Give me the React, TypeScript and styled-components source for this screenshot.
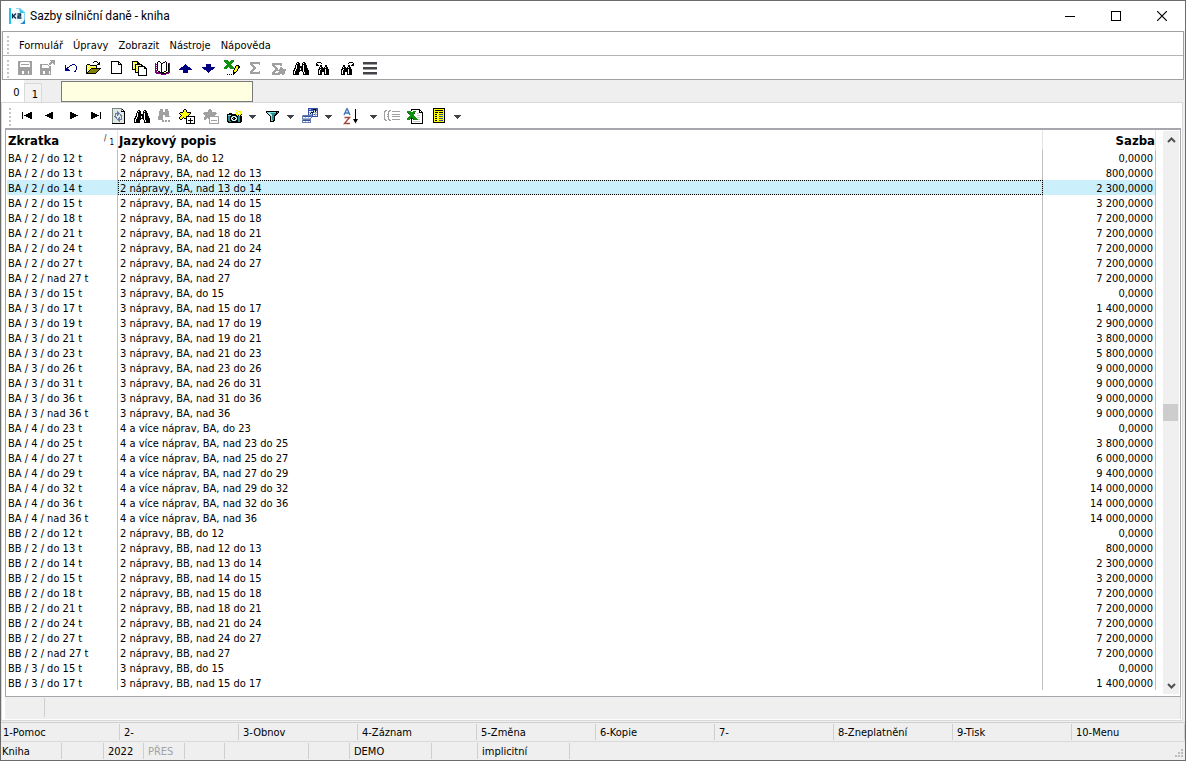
import React from "react";
import styled, { createGlobalStyle, css } from "styled-components";

const GlobalStyle = createGlobalStyle`
  * { box-sizing: border-box; }
  body { margin: 0; background: #efefef; }
  button, input { font: inherit; color: inherit; }
`;

const uiFont = `"DejaVu Sans Condensed", Tahoma, "Noto Sans", sans-serif`;

/* ---------- pixel icons ---------- */

const palette: Record<string, string> = {
  k: "#000000",
  g: "#a0a0a0",
  L: "#c8c8c8",
  n: "#000080",
  b: "#2f52a8",
  s: "#9db4dc",
  y: "#ffffb0",
  Y: "#ffff00",
  o: "#808000",
  G: "#109010",
  D: "#005500",
  p: "#800080",
  w: "#ffffff",
  c: "#7fdcdc",
  t: "#2d8a8a",
  r: "#b04030",
  d: "#404448",
  e: "#dfe8e2",
  q: "#6c7ca8",
  m: "#7c8680",
};

type PixelProps = { rows: string[]; x?: number; y?: number; size?: number };

function Pixels({ rows, x = 0, y = 0, size = 17 }: PixelProps) {
  const cells: React.ReactNode[] = [];
  rows.forEach((row, j) => {
    let i = 0;
    while (i < row.length) {
      const ch = row[i];
      let end = i + 1;
      while (end < row.length && row[end] === ch) end++;
      if (ch !== ".") {
        cells.push(
          <rect key={`${j}-${i}`} x={x + i} y={y + j} width={end - i} height={1} fill={palette[ch]} />
        );
      }
      i = end;
    }
  });
  return (
    <svg width={size} height={17} viewBox={`0 0 ${size} 17`} shapeRendering="crispEdges" aria-hidden="true">
      {cells}
    </svg>
  );
}

const art = {
  save: [
    "gggggggggggggg",
    "ggLwwwwwwwwLgg",
    "ggwwwwwwwwwwgg",
    "ggwggggggggwgg",
    "ggwwwwwwwwwwgg",
    "ggwwwwwwwwwwgg",
    "gggggggggggggg",
    "gggggggggggggg",
    "gggggggggggggg",
    "gggggggggggggg",
    "ggggwwggggwggg",
    "ggggwwggggwggg",
    "ggggwwggggwggg",
    "gggggggggggggg",
  ],
  saveAs: [
    "..........ggggg",
    "...........gggg",
    "..........ggggg",
    ".........ggg.gg",
    "gggggggg.gg...g",
    "ggwwwwwwg......",
    "ggwwwwwwwgg....",
    "ggwwwwwwwgg....",
    "ggggggggggg....",
    "ggggggggggg....",
    "ggggggggggg....",
    "gggwwggggwg....",
    "gggwwggggwg....",
    "gggwwggggwg....",
    "ggggggggggg....",
  ],
  undo: [
    ".......nnn...",
    "n....nn...n..",
    "n...n......n.",
    "n.nn.......n.",
    "nnn........n.",
    "nnnn.......n.",
    "nnnnn.....n..",
    ".........nn..",
  ],
  open: [
    ".........kkk....",
    "........k...k.k.",
    ".............kk.",
    "..kkk.......kkk.",
    ".kyYykkkkkkk....",
    ".kYyYyYyYyYk....",
    ".kyYyYyYyYyk....",
    ".kYyYykkkkkkkkkk",
    ".kyYykooooooook.",
    ".kYykooooooook..",
    ".kykooooooook...",
    ".kkooooooook....",
    ".kkkkkkkkkk.....",
  ],
  page: [
    "kkkkkkkk...",
    "kwwwwwwkk..",
    "kwwwwwwkwk.",
    "kwwwwwwkkkk",
    "kwwwwwwwwwk",
    "kwwwwwwwwwk",
    "kwwwwwwwwwk",
    "kwwwwwwwwwk",
    "kwwwwwwwwwk",
    "kwwwwwwwwwk",
    "kwwwwwwwwwk",
    "kwwwwwwwwwk",
    "kkkkkkkkkkk",
  ],
  pages: [
    "kkkkkk.........",
    "kyYyYkk........",
    "kYyYykkk.......",
    "kyYkkkkkkk.....",
    "kYykyYyYykk....",
    "kyYkYykkkkkkk..",
    "kYykyYkwwwwwkk.",
    "kyYkYykwwwwwkkk",
    "kkkkyYkwwwwwwwk",
    "...kYykwwwwwwwk",
    "...kyYkwwwwwwwk",
    "...kkkkwwwwwwwk",
    "......kwwwwwwwk",
    "......kwwwwwwwk",
    "......kkkkkkkkk",
  ],
  book: [
    "...kk.....k....",
    "..kwwk..kkwk...",
    "p.kwwwkkwwwkypp",
    "ppkwwwkwwwwkykp",
    "p.kwwwkwwwwkykp",
    "ppkwwwkwwwwkykp",
    "p.kwwwkwwwwkykp",
    "ppkwwwkwwwwkykp",
    "p.kwwwkwwwwkykp",
    "ppkwwwkwwwwkykp",
    "pp.kkwkwwkkyykp",
    "ppppkkkkkyykkpp",
    ".pppppkkkkkppp.",
    "......ppppp....",
  ],
  up: [
    "......n......",
    ".....nnn.....",
    "....nnnnn....",
    "..nnnnnnnnn..",
    ".nnnnnnnnnnn.",
    "nnnnnnnnnnnnn",
    "....nnnnn....",
    "....nnnnn....",
    "....nnnnn....",
  ],
  down: [
    "....nnnnn....",
    "....nnnnn....",
    "....nnnnn....",
    "nnnnnnnnnnnnn",
    ".nnnnnnnnnnn.",
    "..nnnnnnnnn..",
    "....nnnnn....",
    ".....nnn.....",
    "......n......",
  ],
  excelEdit: [
    "GGGG...GGG......",
    "GGGGG.GGGG......",
    ".GGGGGGGG.......",
    "..GGGGGG........",
    "...GGGG.........",
    "..GGGGGG....kkk.",
    ".GGGGGGGG..kYYkk",
    "GGGG.GGGGG.kYYkk",
    "GGG...GGGGkYYYk.",
    "..........kYYk..",
    ".........kYYYk..",
    ".........kYYk...",
    ".........kkk....",
    ".........kk.....",
    "...k.k.k.k......",
  ],
  sigma: [
    "gggggggggg",
    "gggggggggg",
    "ggg......g",
    ".ggg......",
    "..ggg.....",
    "...ggg....",
    "...ggg....",
    "..ggg.....",
    ".ggg......",
    "ggg......g",
    "gggggggggg",
    "gggggggggg",
  ],
  sigmaLeaf: [
    "gggggggggg....",
    "gggggggggg....",
    "ggg.....gg....",
    ".ggg..........",
    "..ggg...gg....",
    "...ggg..ggg...",
    "...ggg.ggggggg",
    "..gggggggggggg",
    ".ggg...gggggg.",
    "ggg...ggggggg.",
    "ggggggggggggg.",
    "gggggggg..gg..",
  ],
  find: [
    "....kk....kk....",
    "...kwkk..kwkk...",
    "...kkkk..kkkk...",
    "..kwkkk..kwkkk..",
    "..kwkkkkkkwkkk..",
    "..kwkkkkkkwkkk..",
    ".kkwkkkwkkwkkkk.",
    ".kwkkkkwkkwkkkk.",
    "kkwkkkkkkkwkkkkk",
    "kwkkkkk..kwkkkkk",
    "kwkkkk....kwkkkk",
    "kwkkkk....kwkkkk",
    "kkkkkk....kkkkkk",
  ],
  findPrev: [
    ".kkkk.........",
    "k....k........",
    "kk............",
    "kkk.kk...kk...",
    "....kk...kk...",
    "...kwkk.kwkk..",
    "...kkkkkkkkk..",
    "..kkwkkkkwkkk.",
    "..kwkkkkkwkkk.",
    "..kwkkkkkwkkk.",
    "..kwkk..kwkkk.",
    "..kwkk..kwkkk.",
    "..kkkk..kkkkk.",
  ],
  findNext: [
    ".........kkkk.",
    "........k....k",
    "............kk",
    "...kk...kk.kkk",
    "...kk...kk....",
    "..kwkk.kwkk...",
    "..kkkkkkkkk...",
    ".kkwkkkkwkkk..",
    ".kwkkkkkwkkk..",
    ".kwkkkkkwkkk..",
    ".kwkk..kwkkk..",
    ".kwkk..kwkkk..",
    ".kkkk..kkkkk..",
  ],
  menu: [
    "dddddddddddddd",
    "dddddddddddddd",
    "gggggggggggggg",
    "..............",
    "..............",
    "dddddddddddddd",
    "dddddddddddddd",
    "gggggggggggggg",
    "..............",
    "..............",
    "dddddddddddddd",
    "dddddddddddddd",
    "gggggggggggggg",
  ],
  first: [
    "k.......kk",
    "k.....kkkk",
    "k...kkkkkk",
    "k.kkkkkkkk",
    "k...kkkkkk",
    "k.....kkkk",
    "k.......kk",
  ],
  prev: ["......kk", "....kkkk", "..kkkkkk", "kkkkkkkk", "..kkkkkk", "....kkkk", "......kk"],
  next: ["kk......", "kkkk....", "kkkkkk..", "kkkkkkkk", "kkkkkk..", "kkkk....", "kk......"],
  last: [
    "kk.......k",
    "kkkk.....k",
    "kkkkkk...k",
    "kkkkkkkk.k",
    "kkkkkk...k",
    "kkkk.....k",
    "kk.......k",
  ],
  refresh: [
    "mmmmmmmmmm...",
    "meeeeeeeemk..",
    "meeeeeeeemwk.",
    "meeeeqeeekkkk",
    "meeeeqqeeeeek",
    "meeqqqqqeeeek",
    "meeqeqqeqeeek",
    "meeqeqeeqqeek",
    "meqqeeeeeqeek",
    "meeqqeeqeqeek",
    "meeeqeqqeqeek",
    "meeeeqqqqqeek",
    "meeeeeqqeeeek",
    "meeeeeeqeeeek",
    "meeeeeeeeeeek",
    "kkkkkkkkkkkkk",
  ],
  findMore: [
    "..ggg..ggg..",
    "..ggg..ggg..",
    ".gggg..gggg.",
    ".gggggggggg.",
    ".gggggggggg.",
    ".gggggggggg.",
    ".ggggwwgggg.",
    "gggggwwggggg",
    "ggggg.......",
    "ggggg.......",
    "ggggg.......",
    "....gg.gg.gg",
    "....gg.gg.gg",
  ],
  leafAdd: [
    ".....kk.........",
    "....kYYk........",
    "....kYYk........",
    ".kkkYYYYkkkk....",
    "kYYYYYYYYYYk....",
    ".kYYYYYYYYk.....",
    "..kYYYYYYk......",
    ".kYYYYYkkkkkkkkk",
    "kYYYkYYkwwwwwwwk",
    "kYYk.kkkwwwkwwwk",
    ".kk....kwwwkwwwk",
    ".......kwkkkkkwk",
    ".......kwwwkwwwk",
    ".......kwwwkwwwk",
    ".......kkkkkkkkk",
  ],
  leafRemove: [
    "......gg........",
    ".....gggg.......",
    ".....gggg.......",
    ".gggggggggggg...",
    "gggggggggggggg..",
    ".gggggggggggg...",
    "..gggggggggg....",
    "..gggggggggggggg",
    ".ggggggwwwwwwwwg",
    ".ggg.ggwwwwwwwwg",
    ".gg...gwwwwwwwwg",
    "......gwggggggwg",
    "......gwwwwwwwwg",
    "......gwwwwwwwwg",
    "......gggggggggg",
  ],
  camera: [
    ".........Y..Y.Y.",
    "........Y.YYYY..",
    ".........YYwYYY.",
    "..kkk....YYwwYY.",
    "kkkkkkkkkYYYYYk.",
    "kccckkkkkkYkYkY.",
    "kttkkcwwckkttkk.",
    "kttkcwkkwckttkk.",
    "kttkwkgkkwkttkk.",
    "kttkcwkkwckttkk.",
    "kttkkcwwckkttkk.",
    "kkttkkkkkkkttkk.",
    ".kkkkkkkkkkkkk..",
  ],
  funnel: [
    "kkkkkkkkkkkkk",
    "kcccccccccktk",
    ".kcwctttttkk.",
    "..kcwctttkk..",
    "...kcwttkk...",
    "....kcttk....",
    "....kcttk....",
    "....kcttk....",
    "....kcttk....",
    "....kcckk....",
    "....kkkk.....",
  ],
  cascade: [
    "......bbbbbbbbbb",
    "......bssbbkkkbb",
    "......bbbbbbskbb",
    "......bwwswkwkwb",
    "......bsskkbsssb",
    "......bwkwbwwswb",
    "......bsssbsbssb",
    "sqqqqqqqqqbwwswb",
    "qbbbbbbbbqbbbbbb",
    "qwwswwswwq......",
    "qsssssssq.......",
    "sqqqqqqqq.......",
    "qbbbbbbbq.......",
    "qwwswwswq.......",
    "qqqqqqqqq.......",
  ],
  tree: [
    ".gg..gg.........",
    "gg..gg..gggggggg",
    "g...g...........",
    "g...g...........",
    "g..gg...gggggggg",
    "g...g...........",
    "g..gg...gggggggg",
    "g...g...........",
    "g...g...........",
    "gg..gg..gggggggg",
    ".gg..gg.........",
  ],
  excel: [
    "....kkkkkkkkk...",
    "....kwwwwwwwkk..",
    "GGGGwwGGGwwwkwk.",
    "GGGGGGGGwwwwkkkk",
    ".DGGGGGDwwLLwwwk",
    "..GGGGGwwwwwwwwk",
    "...GGGGwwwLLLwwk",
    "..GGGGGGwwwwwwwk",
    ".GGGDGGGGwLLLwwk",
    "GGGGkDGGGGwwwwwk",
    "GGG.kwDGGGGLLwwk",
    "....kwwwwwwwwwwk",
    "....kwLLLLLLLwwk",
    "....kwwwwwwwwwwk",
    "....kkkkkkkkkkkk",
  ],
  list: [
    "kkkkkkkkkkkk",
    "kYYYYYYYYYYk",
    "kYkkkkkkkkYk",
    "kYYYYYYYYYYk",
    "kYkkkYkkkkYk",
    "kYYYYYYYYYYk",
    "kYkkYYbbbbYk",
    "kYYYYYYYYYYk",
    "kYkkYYbbbbYk",
    "kYYYYYYYYYYk",
    "kYkkYYbbbbYk",
    "kYYYYYYYYYYk",
    "kYkkYYbbbbYk",
    "kYYYYYYYYYYk",
    "kkkkkkkkkkkk",
  ],
  caret: ["ddddddd", ".ddddd.", "..ddd..", "...d..."],
};

const SortIcon = () => (
  <svg width={17} height={17} viewBox="0 0 17 17" fill="none" aria-hidden="true">
    <path d="M1 7 L4 0.5 L7 7 M2 5 H6" stroke="#3f76b8" strokeWidth="1.4" />
    <path d="M1.5 9.5 H6.5 L1.5 15.5 H7" stroke="#a5483c" strokeWidth="1.4" />
    <path d="M12.5 1 V14" stroke="#000" />
    <path d="M10 11 H15 L12.5 15.5 Z" fill="#000" />
  </svg>
);

const AppLogo = () => (
  <svg width={17} height={18} viewBox="0 0 17 18" aria-hidden="true">
    <rect x="0" y="1" width="2" height="16" fill="#22c3f0" />
    <path d="M7 1 H12 L16 5 V17 H12 L4 12 Z" fill="#eefafd" />
    <path d="M7 1.5 H11.5 L15.5 5 V12" fill="none" stroke="#8fdcf2" />
    <path d="M10 1 L16 6 H11 Z" fill="#39c4ee" />
    <path d="M16 11 V17 H11 Q15 15.500 16 11 Z" fill="#2a86c6" />
    <path d="M3.500 6.500 V11.500 M7 6.500 L4.500 9 L7 11.500 M8.500 7 H11.500 V9 H9 V11 H12.500" fill="none" stroke="#0d2f4f" strokeWidth="1.400" />
  </svg>
);

/* ---------- window frame ---------- */

const Window = styled.main`
  display: flex;
  flex-direction: column;
  min-height: 100vh;
  border: 1px solid #6b6b6b;
  background: #efefef;
  color: #000;
  font: 11px/15px ${uiFont};
`;

const TitleBar = styled.header`
  display: flex;
  align-items: center;
  height: 30px;
  padding-left: 8px;
  background: #fff;
`;

const Title = styled.h1`
  flex: 1;
  margin: 0 0 0 4px;
  font: 400 12px/16px Roboto, "Noto Sans", sans-serif;
`;

const WindowButton = styled.button`
  display: flex;
  align-items: center;
  justify-content: center;
  width: 46px;
  height: 28px;
  padding: 0;
  border: 0;
  background: none;
`;

const CommandArea = styled.div`
  margin: 0 1px;
  border: 1px solid #a0a0a0;
  background: #fff;
`;

const Bar = styled.div<{ $height: number; $line?: boolean }>`
  display: flex;
  align-items: center;
  height: ${(p) => p.$height}px;
  padding: 2px 0 0 4px;
  border-bottom: ${(p) => (p.$line ? "1px solid #b4b4b4" : "0")};
`;

const Grip = styled.span`
  width: 2px;
  height: 18px;
  margin-right: 4px;
  background: repeating-linear-gradient(#c4c4c4 0 2px, transparent 2px 4px);
`;

const MenuBar = styled.nav`
  display: flex;
  padding: 2px 0 0 1px;
`;

const MenuItem = styled.button`
  height: 18px;
  padding: 0 5px;
  border: 0;
  background: none;
  white-space: nowrap;
`;

const ToolButton = styled.button<{ $width?: number }>`
  display: flex;
  flex: none;
  align-items: center;
  justify-content: center;
  width: ${(p) => p.$width ?? 23}px;
  height: 21px;
  padding: 0;
  border: 0;
  background: none;
  svg { display: block; }
`;

/* ---------- tabs ---------- */

const TabRow = styled.div`
  display: flex;
  align-items: flex-end;
  height: 22px;
`;

const Tab = styled.button<{ $active?: boolean }>`
  height: ${(p) => (p.$active ? 22 : 19)}px;
  width: ${(p) => (p.$active ? 23 : 18)}px;
  padding: 2px 0 0 ${(p) => (p.$active ? 8 : 4)}px;
  border: ${(p) => (p.$active ? "0" : "1px solid #d9d9d9")};
  border-bottom: 0;
  background: ${(p) => (p.$active ? "#fff" : "#f3f3f3")};
`;

const QuickSearch = styled.input`
  align-self: center;
  width: 192px;
  height: 21px;
  margin-left: 19px;
  padding: 0 4px;
  border: 1px solid #7a7a7a;
  border-radius: 0;
  background: #ffffe1;
`;

/* ---------- data panel ---------- */

const Panel = styled.section`
  flex: 1;
  display: flex;
  flex-direction: column;
  margin-right: 2px;
  padding: 0 1px 1px 3px;
  border: 1px solid #d9d9d9;
  background: #fff;
`;

const GridFrame = styled.div`
  flex: 1;
  display: flex;
  padding: 0 1px 2px 1px;
  border: 1px solid #a6a6ac;
  border-top-width: 2px;
`;

const Table = styled.table`
  flex: 1;
  align-self: flex-start;
  table-layout: fixed;
  width: 0;
  border-collapse: separate;
  border-spacing: 0;
`;

const HeadCell = styled.th<{ $width?: number; $right?: boolean }>`
  position: relative;
  width: ${(p) => (p.$width ? `${p.$width}px` : "auto")};
  height: 20px;
  padding: 2px ${(p) => (p.$right ? 0 : 2)}px 0 1px;
  border-right: 1px solid #e2e2e2;
  font-size: 13px;
  line-height: 18px;
  text-align: ${(p) => (p.$right ? "right" : "left")};
`;

const SortMark = styled.span`
  position: absolute;
  right: 3px;
  top: 3px;
  display: flex;
  gap: 3px;
  font-size: 8px;
  font-weight: 400;
  line-height: 12px;
`;

const SortOrder = styled.span`
  padding-top: 4px;
`;

const selected = css`
  background: #cceffc;
`;

const Row = styled.tr<{ $selected?: boolean }>`
  ${(p) => p.$selected && selected}
`;

const Cell = styled.td<{ $right?: boolean; $focus?: boolean }>`
  height: 15px;
  padding: 2px 2px 0 ${(p) => (p.$right ? 0 : 2)}px;
  border-right: 1px solid #c0c0c0;
  outline: ${(p) => (p.$focus ? "1px dotted #000" : "0")};
  outline-offset: -1px;
  line-height: 13px;
  text-align: ${(p) => (p.$right ? "right" : "left")};
  white-space: nowrap;
  &:first-child { padding-left: 1px; }
`;

const ScrollTrack = styled.div`
  display: flex;
  flex-direction: column;
  width: 16px;
  margin: 1px 0 0 7px;
  background: #f0f0f0;
`;

const ScrollArrow = styled.button`
  display: flex;
  align-items: center;
  justify-content: center;
  height: 17px;
  padding: 0;
  border: 0;
  background: none;
`;

const ScrollSpace = styled.div`
  flex: 1 1 0;
`;

const ScrollThumb = styled.div`
  height: 17px;
  margin-right: 1px;
  background: #cdcdcd;
`;

const SummaryBar = styled.div`
  display: flex;
  height: 22px;
  padding: 1px 0 2px;
  border-right: 1px solid #d4d4d4;
  background: #efefef;
`;

const SummaryCell = styled.div`
  width: 40px;
  border-right: 1px solid #cfcfcf;
`;

/* ---------- footer ---------- */

const Footer = styled.footer`
  margin-top: 1px;
  border-top: 1px solid #cfcfcf;
`;

const FunctionKeys = styled.div`
  display: grid;
  grid-template-columns: repeat(9, 119px) 1fr;
  height: 19px;
  padding: 1px 0;
  border-bottom: 1px solid #d9d9d9;
`;

const FunctionKey = styled.button`
  padding: 2px 0 0 4px;
  border: 0;
  border-right: 1px solid #cfcfcf;
  background: none;
  line-height: 14px;
  text-align: left;
  white-space: nowrap;
  &:first-child { padding-left: 2px; }
`;

const StatusRow = styled.div`
  display: flex;
  height: 18px;
  padding: 1px 0;
`;

const StatusCell = styled.div<{ $width: number; $muted?: boolean }>`
  width: ${(p) => p.$width}px;
  padding: 2px 0 0 4px;
  border-right: 1px solid #cfcfcf;
  color: ${(p) => (p.$muted ? "#a3a3a3" : "#000")};
  line-height: 14px;
  &:first-child { padding-left: 1px; }
`;

const ResizeCorner = styled.div`
  display: flex;
  align-items: flex-end;
  margin-left: auto;
`;

/* ---------- data ---------- */

const axle = (n: string) => (n === "4" ? "4 a více náprav" : `${n} nápravy`);

// kind, axles, range in the short name, range in the description, rate
const source: [string, string, string, string, string][] = [
  ["BA", "2", "do 12", "do 12", "0,0000"],
  ["BA", "2", "do 13", "nad 12 do 13", "800,0000"],
  ["BA", "2", "do 14", "nad 13 do 14", "2 300,0000"],
  ["BA", "2", "do 15", "nad 14 do 15", "3 200,0000"],
  ["BA", "2", "do 18", "nad 15 do 18", "7 200,0000"],
  ["BA", "2", "do 21", "nad 18 do 21", "7 200,0000"],
  ["BA", "2", "do 24", "nad 21 do 24", "7 200,0000"],
  ["BA", "2", "do 27", "nad 24 do 27", "7 200,0000"],
  ["BA", "2", "nad 27", "nad 27", "7 200,0000"],
  ["BA", "3", "do 15", "do 15", "0,0000"],
  ["BA", "3", "do 17", "nad 15 do 17", "1 400,0000"],
  ["BA", "3", "do 19", "nad 17 do 19", "2 900,0000"],
  ["BA", "3", "do 21", "nad 19 do 21", "3 800,0000"],
  ["BA", "3", "do 23", "nad 21 do 23", "5 800,0000"],
  ["BA", "3", "do 26", "nad 23 do 26", "9 000,0000"],
  ["BA", "3", "do 31", "nad 26 do 31", "9 000,0000"],
  ["BA", "3", "do 36", "nad 31 do 36", "9 000,0000"],
  ["BA", "3", "nad 36", "nad 36", "9 000,0000"],
  ["BA", "4", "do 23", "do 23", "0,0000"],
  ["BA", "4", "do 25", "nad 23 do 25", "3 800,0000"],
  ["BA", "4", "do 27", "nad 25 do 27", "6 000,0000"],
  ["BA", "4", "do 29", "nad 27 do 29", "9 400,0000"],
  ["BA", "4", "do 32", "nad 29 do 32", "14 000,0000"],
  ["BA", "4", "do 36", "nad 32 do 36", "14 000,0000"],
  ["BA", "4", "nad 36", "nad 36", "14 000,0000"],
  ["BB", "2", "do 12", "do 12", "0,0000"],
  ["BB", "2", "do 13", "nad 12 do 13", "800,0000"],
  ["BB", "2", "do 14", "nad 13 do 14", "2 300,0000"],
  ["BB", "2", "do 15", "nad 14 do 15", "3 200,0000"],
  ["BB", "2", "do 18", "nad 15 do 18", "7 200,0000"],
  ["BB", "2", "do 21", "nad 18 do 21", "7 200,0000"],
  ["BB", "2", "do 24", "nad 21 do 24", "7 200,0000"],
  ["BB", "2", "do 27", "nad 24 do 27", "7 200,0000"],
  ["BB", "2", "nad 27", "nad 27", "7 200,0000"],
  ["BB", "3", "do 15", "do 15", "0,0000"],
  ["BB", "3", "do 17", "nad 15 do 17", "1 400,0000"],
];

type Tool = { label: string; rows?: string[]; x?: number; y?: number; width?: number; size?: number; icon?: React.ReactNode };

const caret = (label: string): Tool => ({ label, rows: art.caret, x: 1, y: 7, width: 15, size: 9 });

const mainTools: Tool[] = [
  { label: "Uložit", rows: art.save, x: 2, y: 1 },
  { label: "Uložit a zavřít", rows: art.saveAs, x: 1, y: 0 },
  { label: "Zpět", rows: art.undo, x: 3, y: 4 },
  { label: "Otevřít", rows: art.open, x: 0, y: 1 },
  { label: "Nový", rows: art.page, x: 3, y: 1 },
  { label: "Kopie", rows: art.pages, x: 1, y: 1 },
  { label: "Kniha", rows: art.book, x: 1, y: 1 },
  { label: "Nahoru", rows: art.up, x: 2, y: 4 },
  { label: "Dolů", rows: art.down, x: 2, y: 4 },
  { label: "Upravit v Excelu", rows: art.excelEdit, x: 1, y: 0 },
  { label: "Součet", rows: art.sigma, x: 4, y: 2 },
  { label: "Součet označených", rows: art.sigmaLeaf, x: 3, y: 3 },
  { label: "Hledat", rows: art.find, x: 1, y: 2 },
  { label: "Hledat předchozí", rows: art.findPrev, x: 1, y: 2 },
  { label: "Hledat další", rows: art.findNext, x: 2, y: 2 },
  { label: "Nabídka", rows: art.menu, x: 2, y: 2 },
];

const gridTools: Tool[] = [
  { label: "První", rows: art.first, x: 4, y: 4 },
  { label: "Předchozí", rows: art.prev, x: 4, y: 4 },
  { label: "Další", rows: art.next, x: 6, y: 4 },
  { label: "Poslední", rows: art.last, x: 4, y: 4 },
  { label: "Obnovit", rows: art.refresh, x: 2, y: 0 },
  { label: "Najít", rows: art.find, x: 1, y: 2 },
  { label: "Najít více", rows: art.findMore, x: 2, y: 1 },
  { label: "Označit", rows: art.leafAdd, x: 0, y: 1 },
  { label: "Zrušit označení", rows: art.leafRemove, x: 1, y: 1 },
  { label: "Snímek", rows: art.camera, x: 2, y: 2 },
  caret("Možnosti snímku"),
  { label: "Filtr", rows: art.funnel, x: 3, y: 3 },
  caret("Možnosti filtru"),
  { label: "Sloupce", rows: art.cascade, x: 1, y: 0 },
  caret("Možnosti sloupců"),
  { label: "Seřadit", icon: <SortIcon />, width: 30 },
  caret("Možnosti řazení"),
  { label: "Strom", rows: art.tree, x: 0, y: 2 },
  { label: "Export do Excelu", rows: art.excel, x: 0, y: 1 },
  { label: "Seznam", rows: art.list, x: 3, y: 0 },
  caret("Možnosti seznamu"),
];

const Tools = ({ items }: { items: Tool[] }) => (
  <>
    {items.map((t) => (
      <ToolButton key={t.label} aria-label={t.label} $width={t.width}>
        {t.icon ?? <Pixels rows={t.rows!} x={t.x} y={t.y} size={t.size} />}
      </ToolButton>
    ))}
  </>
);

const functionKeys = [
  "1-Pomoc", "2-", "3-Obnov", "4-Záznam", "5-Změna",
  "6-Kopie", "7-", "8-Zneplatnění", "9-Tisk", "10-Menu",
];

const statusCells: { text: string; width: number; muted?: boolean }[] = [
  { text: "Kniha", width: 61 },
  { text: "", width: 42 },
  { text: "2022", width: 40 },
  { text: "PŘES", width: 41, muted: true },
  { text: "", width: 40 },
  { text: "", width: 84 },
  { text: "", width: 41 },
  { text: "DEMO", width: 82 },
  { text: "", width: 46 },
  { text: "implicitní", width: 92 },
];

export default function App() {
  return (
    <Window>
      <GlobalStyle />
      <TitleBar>
        <AppLogo />
        <Title>Sazby silniční daně - kniha</Title>
        <WindowButton aria-label="Minimalizovat">
          <svg width="10" height="10" aria-hidden="true"><rect y="5" width="10" height="1" /></svg>
        </WindowButton>
        <WindowButton aria-label="Maximalizovat">
          <svg width="10" height="10" aria-hidden="true"><rect x="0.5" y="0.5" width="9" height="9" fill="none" stroke="#000" /></svg>
        </WindowButton>
        <WindowButton aria-label="Zavřít">
          <svg width="10" height="10" aria-hidden="true"><path d="M0 0 L10 10 M10 0 L0 10" stroke="#000" strokeWidth="1.200" /></svg>
        </WindowButton>
      </TitleBar>

      <CommandArea>
        <Bar $height={24} $line>
          <Grip />
          <MenuBar>
            {["Formulář", "Úpravy", "Zobrazit", "Nástroje", "Nápověda"].map((m) => (
              <MenuItem key={m}>{m}</MenuItem>
            ))}
          </MenuBar>
        </Bar>
        <Bar $height={23}>
          <Grip />
          <Tools items={mainTools} />
        </Bar>
      </CommandArea>

      <TabRow>
        <Tab $active>0</Tab>
        <Tab>1</Tab>
        <QuickSearch aria-label="Rychlé hledání" />
      </TabRow>

      <Panel>
        <Bar $height={25}>
          <Grip />
          <Tools items={gridTools} />
        </Bar>
        <GridFrame>
          <Table>
            <thead>
              <tr>
                <HeadCell $width={111}>
                  Zkratka
                  <SortMark>
                    <span>/</span>
                    <SortOrder>1</SortOrder>
                  </SortMark>
                </HeadCell>
                <HeadCell>Jazykový popis</HeadCell>
                <HeadCell $width={113} $right>Sazba</HeadCell>
              </tr>
            </thead>
            <tbody>
              {source.map(([kind, axles, short, long, rate], i) => (
                <Row key={i} $selected={i === 2}>
                  <Cell>{`${kind} / ${axles} / ${short} t`}</Cell>
                  <Cell $focus={i === 2}>{`${axle(axles)}, ${kind}, ${long}`}</Cell>
                  <Cell $right>{rate}</Cell>
                </Row>
              ))}
            </tbody>
          </Table>
          <ScrollTrack>
            <ScrollArrow aria-label="Posunout nahoru">
              <svg width="9" height="6" aria-hidden="true"><path d="M1 5 L4.500 1.500 L8 5" fill="none" stroke="#505050" strokeWidth="2" /></svg>
            </ScrollArrow>
            <ScrollSpace />
            <ScrollThumb />
            <ScrollSpace />
            <ScrollArrow aria-label="Posunout dolů">
              <svg width="9" height="6" aria-hidden="true"><path d="M1 1 L4.500 4.500 L8 1" fill="none" stroke="#505050" strokeWidth="2" /></svg>
            </ScrollArrow>
          </ScrollTrack>
        </GridFrame>
        <SummaryBar>
          <SummaryCell />
        </SummaryBar>
      </Panel>

      <Footer>
        <FunctionKeys>
          {functionKeys.map((k) => (
            <FunctionKey key={k}>{k}</FunctionKey>
          ))}
        </FunctionKeys>
        <StatusRow>
          {statusCells.map((c, i) => (
            <StatusCell key={i} $width={c.width} $muted={c.muted}>{c.text}</StatusCell>
          ))}
          <ResizeCorner>
            <svg width="10" height="10" fill="#bdbdbd" aria-hidden="true">
              <path d="M6 0h2v2h-2z M3 3h2v2h-2z M6 3h2v2h-2z M0 6h2v2h-2z M3 6h2v2h-2z M6 6h2v2h-2z" />
            </svg>
          </ResizeCorner>
        </StatusRow>
      </Footer>
    </Window>
  );
}
